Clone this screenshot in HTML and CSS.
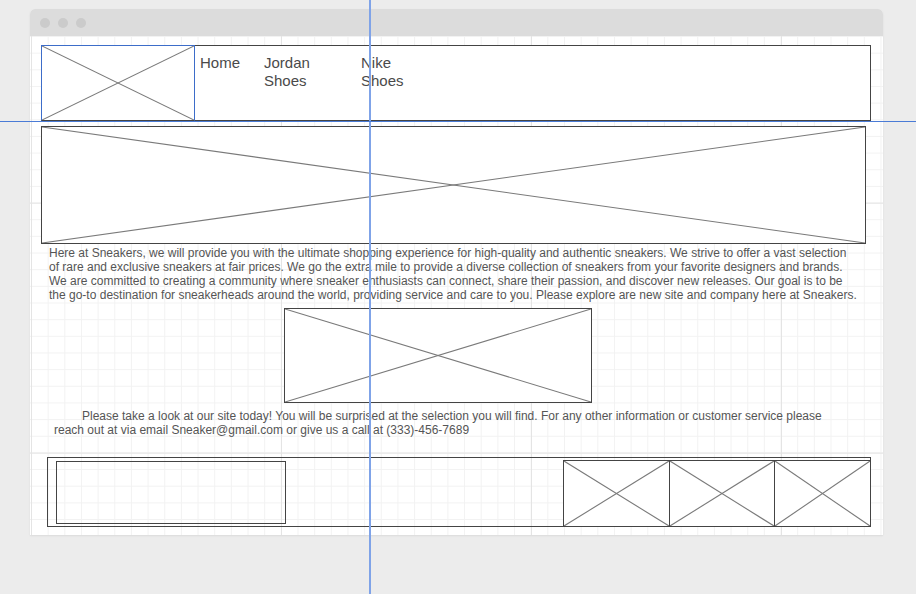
FILE: index.html
```html
<!DOCTYPE html>
<html>
<head>
<meta charset="utf-8">
<link rel="stylesheet" href="styles.css">
</head>
<body>
<div class="stage">
  <div class="window">
    <div class="titlebar">
      <span class="dot"></span><span class="dot"></span><span class="dot"></span>
    </div>
    <div class="canvas">
      <header class="site-header">
        <div class="ph logo">
          <svg viewBox="0 0 100 100" preserveAspectRatio="none"><line x1="0" y1="0" x2="100" y2="100"/><line x1="100" y1="0" x2="0" y2="100"/></svg>
        </div>
        <nav class="nav">
          <a class="nav-home">Home</a>
          <a class="nav-jordan">Jordan Shoes</a>
          <a class="nav-nike">Nike Shoes</a>
        </nav>
      </header>
      <div class="ph hero">
        <svg viewBox="0 0 100 100" preserveAspectRatio="none"><line x1="0" y1="0" x2="100" y2="100"/><line x1="100" y1="0" x2="0" y2="100"/></svg>
      </div>
      <p class="intro">Here at Sneakers, we will provide you with the ultimate shopping experience for high-quality and authentic sneakers. We strive to offer a vast selection of rare and exclusive sneakers at fair prices. We go the extra mile to provide a diverse collection of sneakers from your favorite designers and brands. We are committed to creating a community where sneaker enthusiasts can connect, share their passion, and discover new releases. Our goal is to be the go-to destination for sneakerheads around the world, providing service and care to you. Please explore are new site and company here at Sneakers.</p>
      <div class="ph middle">
        <svg viewBox="0 0 100 100" preserveAspectRatio="none"><line x1="0" y1="0" x2="100" y2="100"/><line x1="100" y1="0" x2="0" y2="100"/></svg>
      </div>
      <p class="contact">Please take a look at our site today! You will be surprised at the selection you will find. For any other information or customer service please reach out at via email Sneaker@gmail.com or give us a call at (333)-456-7689</p>
      <footer class="site-footer">
        <div class="footer-box"></div>
        <div class="thumbs">
          <div class="ph thumb t1"><svg viewBox="0 0 100 100" preserveAspectRatio="none"><line x1="0" y1="0" x2="100" y2="100"/><line x1="100" y1="0" x2="0" y2="100"/></svg></div>
          <div class="ph thumb t2"><svg viewBox="0 0 100 100" preserveAspectRatio="none"><line x1="0" y1="0" x2="100" y2="100"/><line x1="100" y1="0" x2="0" y2="100"/></svg></div>
          <div class="ph thumb t3"><svg viewBox="0 0 100 100" preserveAspectRatio="none"><line x1="0" y1="0" x2="100" y2="100"/><line x1="100" y1="0" x2="0" y2="100"/></svg></div>
        </div>
      </footer>
    </div>
  </div>
  <div class="guide guide-v"></div>
  <div class="guide guide-h"></div>
</div>
</body>
</html>
```

FILE: styles.css
```css
html, body {
  margin: 0;
  padding: 0;
  background: #ececec;
}
body {
  font-family: "Liberation Sans", Arial, sans-serif;
  color: #4a4a4a;
  width: 916px;
  height: 594px;
  overflow: hidden;
}
.stage {
  position: relative;
  width: 916px;
  height: 594px;
  padding: 9px 0 0 30px;
  box-sizing: border-box;
}
.window {
  width: 853px;
  height: 526px;
  background: #ffffff;
  border-radius: 5px 5px 0 0;
  box-shadow: 0 1px 2px rgba(0,0,0,0.08);
  overflow: hidden;
  display: flex;
  flex-direction: column;
}
.titlebar {
  height: 27px;
  flex: none;
  background: #dcdcdc;
  display: flex;
  align-items: center;
  gap: 8px;
  padding-left: 10px;
}
.dot {
  width: 10px;
  height: 10px;
  border-radius: 50%;
  background: #cbcbcb;
}
.canvas {
  flex: 1;
  position: relative;
  background-color: #ffffff;
  background-image:
    linear-gradient(to right, #e4e4e4 1px, transparent 1px),
    linear-gradient(to bottom, #e4e4e4 1px, transparent 1px),
    linear-gradient(to right, #f2f2f2 1px, transparent 1px),
    linear-gradient(to bottom, #f2f2f2 1px, transparent 1px);
  background-size: 250px 250px, 250px 250px, 16.6667px 16.6667px, 16.6667px 16.6667px;
  background-position: 1px 0, 0 166.6667px, 1px 0, 0 0;
  padding: 9px 0 0 11px;
  box-sizing: border-box;
}
.ph {
  position: relative;
  background: #ffffff;
  border: 1px solid #444444;
  box-sizing: border-box;
}
.ph svg {
  position: absolute;
  inset: 0;
  width: 100%;
  height: 100%;
}
.ph line {
  stroke: #7a7a7a;
  stroke-width: 1.1px;
  vector-effect: non-scaling-stroke;
}
.site-header {
  width: 830px;
  height: 76px;
  border: 1px solid #444444;
  box-sizing: border-box;
  background: #ffffff;
  display: flex;
}
.logo {
  width: 154px;
  height: 76px;
  margin: -1px 0 -1px -1px;
  border-color: #3d6dc9;
  border-bottom-color: #444444;
  flex: none;
}
.nav {
  display: flex;
  align-items: flex-start;
  gap: 24px;
  padding: 8px 0 0 5px;
  font-size: 15px;
  line-height: 18px;
  color: #4a4a4a;
}
.nav a {
  display: block;
}
.nav-home { flex: none; }
.nav-jordan { width: 73px; }
.nav-nike { width: 60px; }
.hero {
  width: 825px;
  height: 118px;
  margin-top: 5px;
}
.intro {
  margin: 2px 0 0 8px;
  width: 810px;
  font-size: 12px;
  line-height: 14px;
  color: #555555;
}
.middle {
  width: 308px;
  height: 95px;
  margin: 6px 0 0 243px;
}
.contact {
  margin: 6px 0 0 13px;
  width: 780px;
  text-indent: 28px;
  font-size: 12px;
  line-height: 14px;
  color: #555555;
}
.site-footer {
  width: 824px;
  height: 70px;
  margin: 20px 0 0 6px;
  border: 1px solid #444444;
  box-sizing: border-box;
  display: flex;
  justify-content: space-between;
  align-items: flex-start;
}
.footer-box {
  width: 230px;
  height: 63px;
  margin: 3px 0 0 8px;
  border: 1.5px solid #444444;
  box-sizing: border-box;
}
.thumbs {
  display: flex;
  margin: 2px -1px -1px 0;
  height: 67px;
}
.thumb {
  height: 67px;
}
.t1 { width: 107px; }
.t2 { width: 106px; margin-left: -1px; }
.t3 { width: 97px; margin-left: -1px; }
.guide {
  position: absolute;
  pointer-events: none;
}
.guide-v {
  left: 369px;
  top: 0;
  width: 2px;
  height: 594px;
  background: #7fa3e8;
}
.guide-h {
  left: 0;
  top: 121px;
  width: 916px;
  height: 1px;
  background: #4a7bd6;
}
```
